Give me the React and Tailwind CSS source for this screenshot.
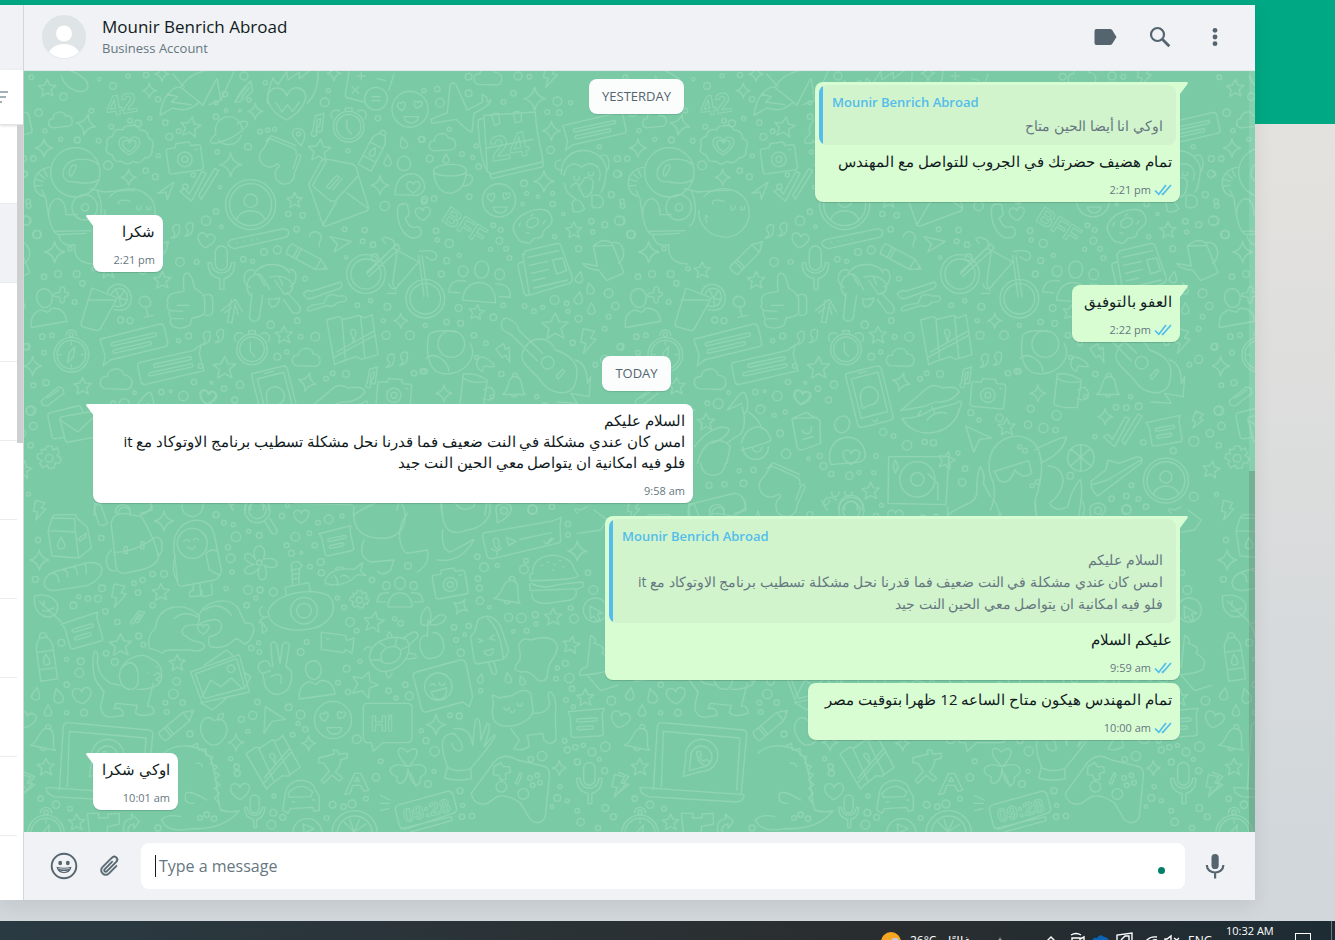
import { BsPaperclip } from "react-icons/bs";

const STAR = "M0-30L9-10L30-9L13 6L20 28L0 17L-19 29L-15 6L-31-7L-10-10Z";
const SPARK = "M0-32Q4-5 30 0Q5 5 0 32Q-5 5-30 0Q-5-4 0-32Z";
const HEART = "M0 24C-36 6-34-24-14-24C-4-24 0-14 0-12C2-18 8-26 18-24C38-18 28 8 0 24Z";
const CLOUD = "M-30 20C-48 12-42-12-24-10C-22-34 16-36 18-14C44-14 44 20 24 22Z";
const DROP = "M0-18C6-6 13 2 11 9C8 19-8 19-11 9C-12 2-5-6 0-18Z";
const BOLT = "M-14-36L20-28L8-8L24-4L-14 38L-6 8L-22 4Z";
const NOTE = "M-16 24L-8-22L18-30L12 16A8 8 0 1 1 4 10L8-14L-2-10L-6 26A8 8 0 1 1-16 24";
const BELL = "M-38 26C-14 16-26-34 4-34C34-34 20 14 38 26ZM-8 26A8 8 0 0 0 8 26M-4-34A8 8 0 1 1 10-34";
const CAMERA = "M-52-26Q-52-34-44-34L-24-34L-20-46L20-46L24-34L44-34Q52-34 52-26V34Q52 42 44 42H-44Q-52 42-52 34ZM-22 4A22 22 0 1 0 22 4A22 22 0 1 0-22 4M-9 4A9 9 0 1 0 9 4A9 9 0 1 0-9 4M34-20H40";
const CHAT = "M-94-30L86-34Q98-34 98-22V24Q98 34 88 34L-76 36L-102 48L-90 22ZM-60-12H66A5 5 0 0 1 66-2H-60A5 5 0 0 1-60-12M-60 10H46A5 5 0 0 1 46 20H-60A5 5 0 0 1-60 10";
const NOTECARD = "M-54-36L50-40L44-24V30Q44 38 36 38H-40Q-48 38-48 30V-22ZM-26-14H24A4 4 0 0 1 24-5H-26A4 4 0 0 1-26-14M-26 8H12A4 4 0 0 1 12 17H-26A4 4 0 0 1-26 8";
const PENCIL = "M-70-16H34L66 2L34 20H-70Q-78 2-70-16M34-16V20M-46-16V20M-36-16V20M56-4V8";
const PERSON = "M0-54C34-54 28 2 0 2C-28 2-34-54 0-54M-54 54C-52 10-22 6-14 8L2 18L16 8C44 10 54 30 54 54Z";
const PEOPLE = "M0-64C30-64 28-10 0-10C-28-10-30-64 0-64M-52 64C-52-16 52-16 52 64ZM-58-44C-38-44-38-10-58-10C-78-10-78-44-58-44M58-44C38-44 38-10 58-10C78-10 78-44 58-44M-62 42H-98C-96 12-80 0-48 4M62 42H98C96 12 80 0 48 4";
const SMILE = "M-54 0A54 54 0 1 0 54 0A54 54 0 1 0-54 0M-24 4C-46-8-38-26-26-18C-20-32-4-16-24 4M18-4C6-22 18-30 24-20C38-32 46-10 18-4M-18 22H26C20 48-14 46-18 22Z";
const AVATAR = "M-75 0A75 75 0 1 0 75 0A75 75 0 1 0-75 0M-63 0A63 63 0 1 0 63 0A63 63 0 1 0-63 0M-20-12A20 20 0 1 0 20-12A20 20 0 1 0-20-12M-42 46C-32 8 34 10 42 46";
const CLOCK = "M-46 0A46 46 0 1 0 46 0A46 46 0 1 0-46 0M-37 0A37 37 0 1 0 37 0A37 37 0 1 0-37 0M-5-20V6L8 22M-48-24A12 12 0 1 1-28-46M48-24A12 12 0 1 0 28-46M-10-46V-56H10V-46";
const COMPASS = "M-52 0A52 52 0 1 0 52 0A52 52 0 1 0-52 0M-43 0A43 43 0 1 0 43 0A43 43 0 1 0-43 0M-16-58A16 16 0 1 1 16-58M-6-60A6 6 0 1 0 6-60A6 6 0 1 0-6-60M10-24L6 8L-12 24L-6-6ZM0-38V-30M38 0H30M0 38V30M-38 0H-30";
const CHECKS = "M-58 10L-44 2L-30 18L8-50L20-44L-24 40ZM-2 22L46-58L58-52L6 34Z";
const MIC = "M-18-50A18 18 0 0 1 18-50V-14A18 18 0 0 1-18-14ZM-30-18H-40C-40 26-10 28-4 30V62H8V30C32 24 40 8 40-18H30C28 24-28 24-30-18Z";
const ENVELOPE = "M-90-16L-54-82Q-46-94-32-90L40-76Q52-72 54-60L90 56Q88 66 76 68L-36 110Q-44 112-48 104ZM-74-6Q-80-12-74-20L-38-82M-74-6L-28 32Q-18 40-8 32L58-40M-48 108L-6 36M90 58L24 10M-36-8L-6-42L2-36L-28-2ZM-18 2L10-32";
const BOTTLE = "M-22 60V-22C-22-44-10-48-10-52H10C10-48 22-44 22-22V60ZM-22-16H22M-22 30H22M-8-52A9 9 0 1 1 8-52M0-8C12 12 10 20 0 20C-10 20-12 12 0-8";
const QUOTES = "M-8-14A12 12 0 1 0-22 8Q-20 20-32 24Q-4 24-8-14M32-20A12 12 0 1 0 18 2Q20 14 8 18Q36 18 32-20";
const MAP = "M-74-56L-36-66L-24-58L24-70L40-62L62-72L80 48L32 62L14 54L-34 70L-50 78ZM-28-58L-18 60M28-66L40 56M-52 56L10 22L70-10M-44 40L66-22M2-10C-14-34 22-34 12-10L6 8Z";
const CUP = "M-52-24C-56-50 54-54 52-24C50 4 42 42 0 46C-38 46-50 4-52-24M-52-24C-50-4 50-4 52-24M50-12C82-20 76 26 42 22";
const GLASSES = "M-58-26A30 30 0 1 0-6 12C-2 4 4 6 6 14A30 30 0 1 0 58 20L62-34Q58-48 50-40L50 6M-58-26L-50-62L30-56Q46-52 44-40M-58-50L-48-72L34-66";
const PHONE = "M-50-78H38Q52-78 52-64V68Q52 82 38 82H-38Q-52 82-52 68V-64ZM-38-60H40V56H-38ZM-14-70H10M-6 69A6 6 0 1 0 6 69M-26 0A26 26 0 1 1-6 25L-28 30Z";
const DONUT = "M-60 4C-66-48 58-54 60-6C64 34 18 20 18 40C4 56-6 34-16 44C-34 62-40 38-48 40C-60 32-58 18-60 4M-18-2C-16-22 22-22 20-4C14 12-16 14-18-2M-40-8L-34-16M-28 18L-20 22M30 10L38 4M4-24L12-28";
const LEAF = "M-34-34C10-44 52-18 28 22C-8 42-40 14-34-34M-20-18L46 44M-6-4V-20M6 8L24 2M-10 10L8 12";
const FLOWER = "M-12-10C-32-64 32-64 12-10C66-26 66 34 14 8C42 60-18 68 0 14C-34 60-72 14-14 6C-66-6-40-52-12-10M-8 0A8 8 0 1 0 8 0A8 8 0 1 0-8 0";
const GEAR = "M-6-26H6L9-16L18-22L24-10L18-4L28 2L24 14L14 12L12 24L0 26L-4 18L-14 24L-22 14L-16 8L-28 2L-26-8L-16-8L-18-18L-8-18ZM-9 2A9 9 0 1 0 9 2A9 9 0 1 0-9 2";

const placed = [
  [STAR, 70, 54, 0.85, 0], [STAR, 500, 170, 1, 10], [STAR, 887, 240, 1.1, 5], [STAR, 812, 390, 0.75, 0],
  [STAR, 415, 630, 0.85, 0], [STAR, 780, 794, 0.85, 0], [STAR, 602, 892, 1.1, 0], [STAR, 176, 948, 0.85, 0],
  [STAR, 1650, 480, 0.8, 0], [STAR, 1594, 768, 1.3, 0], [STAR, 1358, 726, 0.75, 10], [STAR, 253, 600, 0.8, 0],
  [STAR, 411, 1566, 0.85, 0], [STAR, 290, 1724, 1.1, 0], [STAR, 460, 1778, 0.8, 0], [STAR, 66, 2090, 0.85, 0],
  [STAR, 158, 2256, 0.8, 0], [STAR, 1050, 1655, 1, 10], [STAR, 1022, 1842, 1.3, 20], [STAR, 1588, 1640, 0.85, 0],
  [STAR, 1642, 1724, 0.85, 10], [STAR, 1684, 1882, 0.85, 0],
  [SPARK, 186, 164, 1, 12], [SPARK, 376, 62, 0.7, 0], [SPARK, 60, 234, 0.85, 0], [SPARK, 414, 12, 0.7, 0],
  [SPARK, 694, 124, 0.75, 0], [SPARK, 620, 284, 1.1, 0], [SPARK, 314, 322, 0.75, 0], [SPARK, 1068, 346, 0.9, 0],
  [SPARK, 92, 546, 1, 0], [SPARK, 26, 888, 0.9, 0], [SPARK, 850, 936, 0.9, 15], [SPARK, 1130, 752, 0.7, 0],
  [SPARK, 1532, 86, 1.1, 0], [SPARK, 1582, 182, 0.9, 0], [SPARK, 1560, 334, 1, 0], [SPARK, 1260, 970, 0.8, 0],
  [SPARK, 420, 1353, 0.95, 0], [SPARK, 46, 1470, 0.95, 0],
  [SPARK, 636, 2017, 0.8, 0], [SPARK, 854, 2020, 0.7, 0], [SPARK, 1310, 1610, 0.8, 30], [SPARK, 1660, 1443, 0.95, 0],
  [SPARK, 1236, 1964, 0.95, 0], [SPARK, 1606, 2094, 0.7, 0], [SPARK, 930, 10, 0.7, 0],
  [HEART, 316, 228, 1.1, 0], [HEART, 316, 228, 0.7, 0], [HEART, 546, 512, 0.9, 10], [HEART, 1197, 432, 0.8, -5],
  [HEART, 550, 982, 0.85, 10], [HEART, 832, 1340, 0.8, 0], [HEART, 174, 1878, 1, -5],
  [HEART, 538, 1678, 0.6, 0], [HEART, 648, 2165, 1, 0], [HEART, 1788, 1950, 1, 15], [HEART, 1168, 352, 0.7, 0],
  [HEART, 788, 102, 2, 0],
  [CLOUD, 110, 152, 0.9, -8], [CLOUD, 1256, 220, 1, -5], [CLOUD, 848, 866, 1.05, 0], [CLOUD, 278, 932, 1.2, 0],
  [CLOUD, 1393, 22, 1.05, 0],
  [DROP, 1138, 218, 1, -15], [DROP, 1091, 272, 1, 0], [DROP, 1266, 266, 0.8, 0], [DROP, 1666, 622, 1, 12],
  [DROP, 1698, 656, 1, -12], [DROP, 1664, 684, 1.1, 12], [DROP, 1702, 716, 1, 0], [DROP, 36, 1872, 1.1, 10],
  [DROP, 102, 1878, 1.3, -14], [DROP, 72, 1922, 1, 0], [DROP, 111, 1420, 1, 0], [DROP, 1370, 1826, 0.8, 10],
  [DROP, 1452, 1824, 0.9, -10], [DROP, 1494, 1832, 0.8, -20],
  [BOLT, 1578, 18, 0.9, 0], [BOLT, 46, 1320, 0.8, 0], [BOLT, 284, 1576, 0.95, 0], [BOLT, 1692, 812, 1, 0],
  [BOLT, 1444, 848, 0.8, -45], [BOLT, 8, 2144, 1, 10], [BOLT, 1784, 2146, 0.9, 0],
  [NOTE, 882, 160, 1, 0], [NOTE, 1044, 918, 0.9, 0], [NOTE, 342, 1640, 0.7, 25],
  [BELL, 62, 2008, 1, 12], [BELL, 1470, 950, 0.9, 0], [BELL, 1454, 1566, 1.05, 10],
  [CAMERA, 482, 264, 1, -8], [CAMERA, 1110, 972, 0.98, 5], [CAMERA, 1278, 1540, 0.95, -10],
  [CHAT, 328, 816, 1.02, -13], [CHAT, 442, 892, 1, 168], [CHAT, 1710, 176, 0.95, -12],
  [NOTECARD, 180, 1684, 1.1, -16], [NOTECARD, 942, 1414, 0.95, -12], [NOTECARD, 1690, 1960, 1.05, -3],
  [PENCIL, 855, 566, 0.95, 28], [PENCIL, 462, 1958, 0.9, -40], [PENCIL, 390, 556, 0.9, -45],
  [PERSON, 66, 710, 1, -10], [PERSON, 872, 1826, 1, -8], [PEOPLE, 1370, 634, 0.95, 5], [PEOPLE, 1128, 1566, 0.7, 0],
  [SMILE, 1158, 118, 1, 0], [SMILE, 1425, 391, 0.92, 0], [SMILE, 927, 1950, 1.03, 0],
  [AVATAR, 680, 404, 1, 0],
  [CLOCK, 974, 170, 1, 0], [CLOCK, 684, 838, 1, 0], [COMPASS, 142, 854, 1, 0], [COMPASS, 66, 2290, 1.05, 0],
  [CHECKS, 526, 354, 1, 0], [MIC, 592, 596, 1, 0], [MIC, 692, 2226, 0.75, 0], [MIC, 1696, 2142, 0.95, 0],
  [ENVELOPE, 944, 358, 1, 0], [BOTTLE, 1050, 240, 1, 28], [BOTTLE, 66, 1762, 1.15, -8],
  [QUOTES, 474, 480, 1, 0], [QUOTES, 566, 800, 1, 0], [QUOTES, 1118, 868, 1, 0],
  [MAP, 982, 806, 1, 0], [MAP, 746, 2076, 0.9, -20], [CUP, 1278, 326, 0.95, 0], [GLASSES, 764, 276, 0.95, 18],
  [PHONE, 754, 978, 1.05, -14], [DONUT, 1526, 462, 1, -20], [LEAF, 66, 1612, 1, 0], [FLOWER, 706, 1478, 1, 0], [GEAR, 1006, 1588, 1, 0],
];

const drawings = [
  // cookie badge
  "M316 168Q336 160 348 180Q372 180 374 204Q396 216 384 236Q388 262 362 264Q348 286 328 274Q308 290 294 274Q268 278 266 256Q238 248 250 226Q242 204 266 198Q270 172 296 180Q300 166 316 168",
  // rocket
  "M408 136C414 76 450 48 470 52L526 96C490 130 462 118 446 114ZM470 52C490 20 520 0 570 0M526 96L536 106L578 26M430 72L460 80L442 96L500 104M446 12L480 50M556 104L590 92L632 0M590 92L580 28",
  // peeler and hands
  "M112 18C126 66 190 80 192 46C190 28 168 14 140 2M632 96L680 32L686 62Q660 92 642 96ZM640 80L664 48M652 84L676 52",
  // flames over the heart
  "M730 100C728 66 744 36 746 24L762 44L788 4L792 30L826 6L826 26L860 0M882 0C886 60 860 90 850 100M756 98L774 126L790 104L806 124L826 96",
  // calculator
  "M976 0L964 74Q964 84 974 84L1020 96M1110 12L1094 62M1022 86A34 34 0 1 0 1090 86A34 34 0 1 0 1022 86M1044 80H1068M1044 92H1068M984 50L1004 70M1004 50L984 70M1012 6V30M1000 18H1024M1060 26L1084 32",
  // planet
  "M576 192A40 40 0 1 1 654 176M584 210A40 40 0 0 0 652 196M576 192C552 214 552 226 590 216C640 200 690 158 664 154C654 152 644 158 640 162",
  "M810 202C790 172 838 166 842 192C844 206 836 216 832 228ZM818 192A6 6 0 1 0 830 192A6 6 0 1 0 818 192",
  // astronaut
  "M80 307A74 74 0 1 0 228 307A74 74 0 1 0 80 307M226 328C196 348 168 336 132 334C100 318 120 260 182 268Q210 270 220 282M136 308Q138 286 152 284Q164 286 142 318Q136 320 136 308",
  "M76 292C20 298 18 370 58 378M60 300L70 320M46 312L62 326M36 328L56 334M32 348L54 346M54 360L66 386C72 440 82 492 104 494L186 490M74 440C70 380 124 360 126 434H160M90 484L200 482M144 412A38 38 0 1 0 220 412A38 38 0 1 0 144 412M172 412A11 11 0 1 0 194 412A11 11 0 1 0 172 412M104 494C110 530 142 528 152 524C148 580 190 580 208 582M198 356L240 366C300 360 320 360 330 362M218 360C240 400 234 460 214 468",
  "M258 380C290 340 380 350 392 412C404 470 350 510 312 500C260 496 234 440 244 420M284 402C280 388 300 388 318 394M340 408A6 10 20 1 0 352 408M368 410A5 8 0 1 0 380 410M270 440Q258 430 266 456",
  "M402 370L450 336L430 388L426 366ZM918 500L982 514L930 546L940 522Z",
  // password field
  "M612 520Q612 512 626 508L780 476Q796 480 794 490Q794 498 784 502L632 536Q614 532 612 520M640 518h1M660 514h1M682 510h1M700 507h1",
  "M856 500A18 18 0 1 1 888 514Q884 524 886 530",
  // helmet girl and phone
  "M1114 374C1108 300 1198 290 1202 352Q1202 366 1180 376ZM1120 284C1122 250 1158 250 1160 282C1156 308 1124 308 1120 284M1122 410Q1132 396 1150 404L1156 434L1144 444Q1152 470 1168 472L1184 470Q1200 488 1186 500C1140 520 1112 450 1122 410",
  // bicycle
  "M968 612A58 58 0 1 0 1084 612A58 58 0 1 0 968 612M981 612A45 45 0 1 0 1071 612A45 45 0 1 0 981 612M1146 686A58 58 0 1 0 1262 686A58 58 0 1 0 1146 686M1158 686A46 46 0 1 0 1250 686A46 46 0 1 0 1158 686M1028 612L1110 530Q1118 510 1092 504Q1078 498 1074 508L1084 520M1028 606L1120 522L1128 534L1034 620M1120 540L1106 640L1116 662M1110 536L1184 576L1120 650M1184 556L1200 680M1194 556L1212 680M1186 544Q1240 536 1238 560Q1230 580 1206 560M1096 642A14 14 0 1 0 1124 642M1090 670H1116",
  // juice and glass
  "M204 654L280 684L228 778Q222 784 212 780L176 770Q170 768 172 758ZM190 690H276M250 668C262 628 318 636 322 684C320 716 300 726 270 718M262 672C276 644 312 652 310 686C306 710 284 714 268 706M286 684L300 664M286 684L308 690M286 684L290 708M286 684L274 656M346 700C340 672 384 670 380 704Q370 714 356 710ZM366 712L372 740M360 742L388 736M110 652Q118 646 122 656V666L132 668Q136 680 122 680L120 696Q112 704 108 692V682L88 678Q86 668 106 668Z",
  // thumb
  "M432 700Q424 674 456 668L480 664Q476 620 482 612Q494 604 504 624L512 654Q540 670 542 690L542 730Q530 742 504 744L498 766Q470 780 448 770Q434 760 442 744Q430 730 438 722Q424 712 432 700M460 706H496M440 722L476 724M448 746L478 746M540 676Q566 666 566 690V726Q564 738 544 736",
  "M592 722L634 688L656 726M622 690L610 756L624 758L634 700M602 728L622 714M642 734L636 710",
  // monkey hiding
  "M690 610C720 570 780 580 796 608M690 600C660 590 648 640 678 652M796 600C820 590 824 640 798 650M684 680C650 650 680 600 712 616L738 660M738 622Q780 610 804 640Q812 670 780 672L752 630M702 612L722 646M764 618L776 644M684 670L676 744Q690 764 706 744L716 676M790 668L828 710Q832 736 806 728L778 688M734 686Q750 690 768 684Q762 712 742 710Q734 702 734 686",
  "M838 672Q850 656 862 664L950 636Q960 648 946 656L870 682Q850 694 838 672M850 718Q852 704 900 700L910 678Q926 670 940 678H962Q974 688 962 694L940 698Q924 714 910 706L860 722Q850 724 850 718",
  // calendar
  "M1380 136L1534 126Q1536 180 1556 264L1554 276L1402 312L1390 306ZM1388 234L1528 208M1556 264L1558 290L1402 326L1396 306M1404 140Q1402 130 1414 130H1424L1428 160L1412 166ZM1468 130Q1470 124 1482 124L1492 130V154L1474 158ZM1362 150Q1366 270 1392 306M1362 150L1380 144",
  // airplane
  "M1278 44Q1286 34 1296 44L1330 120L1376 96L1374 72L1388 82L1390 96L1400 90Q1402 104 1350 130L1344 186Q1336 188 1296 148L1224 160L1220 148L1270 128Z",
  // monkey covering mouth
  "M1612 312C1610 220 1736 220 1748 300C1744 330 1740 360 1730 366M1612 300C1586 300 1588 270 1610 270M1730 258C1760 240 1760 300 1746 304M1620 316C1630 270 1660 280 1672 292C1700 266 1740 290 1726 330M1640 350Q1660 330 1664 348M1664 350L1684 322Q1714 320 1706 354Q1700 384 1680 380ZM1652 318A8 8 0 1 0 1664 318M1694 306A8 8 0 1 0 1708 306M1622 340Q1622 370 1654 386M1644 400Q1650 380 1670 396L1682 416Q1670 430 1648 424ZM1704 376Q1740 370 1738 402Q1728 420 1704 410Z",
  // newspaper and watering can
  "M1500 554Q1500 544 1508 542L1600 520Q1610 520 1612 530L1644 620Q1648 634 1636 640L1514 676Q1506 680 1500 668L1482 590Q1478 580 1496 576M1496 552L1516 674M1512 562L1604 542M1516 586L1570 574M1522 610L1574 598M1526 632L1562 624M1586 570L1616 564L1628 602L1598 612ZM1530 654L1630 630",
  "M1708 528Q1740 500 1764 520L1800 608L1748 632L1724 600Q1690 600 1676 580L1720 588L1708 528L1766 526M1766 518C1798 510 1812 560 1784 580",
  // lens and guitar
  "M1242 822A40 40 0 1 0 1322 822A40 40 0 1 0 1242 822M1216 792Q1240 776 1300 786M1214 796Q1200 880 1240 906C1300 930 1370 870 1338 820M1206 866C1230 840 1276 876 1274 904M1358 880Q1362 854 1384 864Q1414 880 1410 890H1394Q1376 882 1376 904Q1360 900 1358 880",
  "M1436 780Q1424 746 1450 744Q1484 760 1484 780L1556 850M1462 794L1540 872M1436 780L1462 794M1552 878A19 19 0 1 0 1590 878A19 19 0 1 0 1552 878M1496 846C1520 790 1580 800 1594 840C1660 860 1670 900 1650 950C1630 980 1580 970 1556 940C1540 910 1480 880 1496 846M1596 918L1616 898L1622 904L1602 928ZM1654 870Q1690 880 1690 940L1700 920Q1696 970 1696 980L1640 970L1660 1000L1600 996",
  "M1318 912Q1350 906 1390 930L1378 1012Q1330 1016 1308 1002ZM1316 924Q1350 944 1390 934M1380 960Q1404 940 1412 972Q1404 1000 1376 984M52 992L102 952Q120 950 120 970L72 1006Q52 1012 52 992M70 984L104 960",
  // envelopes
  "M72 1040Q70 1030 80 1028L160 1008Q170 1006 172 1016L178 1026M72 1040L84 1100Q86 1108 96 1106L120 1102M108 1050Q106 1042 114 1040L230 1020M108 1050L124 1110Q126 1118 134 1116L220 1100M108 1050L162 1086L220 1030",
  // squid arms
  "M990 1310C980 1390 1030 1410 1090 1404C1140 1396 1160 1340 1128 1290M1020 1410Q1000 1460 1040 1476L1110 1470L1100 1500Q1080 1520 1060 1504M1150 1330C1110 1380 1130 1440 1148 1450L1210 1440Q1220 1480 1180 1506M1254 1300C1250 1380 1280 1400 1330 1380C1400 1370 1410 1310 1390 1290M1256 1380Q1250 1440 1280 1446L1350 1408M1240 1470Q1310 1480 1350 1410",
  // milk and bread
  "M72 1382L84 1344L92 1334H156V1342L190 1372L202 1434L164 1464L84 1458ZM72 1382L154 1386L164 1464M154 1386L152 1346L88 1344M162 1408L186 1390L186 1400L168 1414Z",
  "M60 1540Q62 1510 110 1500L190 1478Q232 1474 234 1500Q230 1530 190 1546L90 1562Q62 1560 60 1540M88 1510Q104 1512 104 1536M118 1500Q134 1502 130 1520M148 1490Q160 1494 160 1514M180 1480Q190 1490 186 1510",
  // backpack
  "M262 1366Q262 1330 300 1330L352 1340Q390 1400 404 1460Q400 1490 340 1502L300 1510Q280 1510 276 1490ZM270 1446Q320 1450 386 1408M282 1330A17 17 0 1 1 320 1332M262 1440Q240 1460 250 1490Q260 1506 276 1502M388 1404Q410 1396 414 1420V1440Q408 1458 400 1456M300 1430h10v20h-10ZM350 1416h10v20h-10ZM212 1300L230 1304L250 1360Q240 1370 226 1364Q210 1330 212 1300M350 1330L384 1320L380 1290",
  // penguin
  "M450 1440C440 1340 560 1320 572 1400L592 1500Q592 1520 572 1530L476 1548Q460 1550 460 1530ZM460 1420A45 45 0 1 0 550 1420A45 45 0 1 0 460 1420M478 1414Q490 1404 498 1414M508 1410Q516 1400 524 1410M490 1430Q506 1446 514 1428M546 1450Q570 1430 584 1450M546 1450L556 1500L588 1516M454 1456Q440 1500 458 1530M508 1548V1560Q490 1566 498 1580L530 1578L528 1542M534 1560Q530 1578 540 1580L566 1574L562 1540",
  // magnifier
  "M662 1320A38 38 0 1 0 738 1320A38 38 0 1 0 662 1320M674 1320A26 26 0 1 0 726 1320A26 26 0 1 0 674 1320M722 1354L744 1390Q760 1396 760 1382L738 1346",
  // fish
  "M904 1530Q920 1490 990 1498L1016 1478L1010 1504L1026 1516L1000 1514Q960 1556 904 1540ZM934 1496Q946 1486 960 1494M930 1516Q946 1530 938 1546M922 1522h2M950 1520Q962 1510 974 1524",
  // submarine
  "M732 1626C750 1570 860 1550 912 1576C950 1610 920 1670 850 1678C790 1686 736 1670 732 1626M800 1622A40 40 0 1 0 880 1622A40 40 0 1 0 800 1622M818 1622A22 22 0 1 0 862 1622A22 22 0 1 0 818 1622M786 1576L784 1552L854 1538L860 1566M806 1546L802 1486Q806 1472 824 1476L834 1486L826 1500L824 1542M804 1500L824 1496M806 1514L824 1510M806 1528L824 1524M716 1610A16 16 0 1 0 730 1640Q700 1650 708 1660M714 1656L716 1690L730 1680Z",
  // heart hands
  "M414 1750Q400 1740 376 1736Q366 1700 394 1674L400 1650C420 1600 490 1600 524 1636Q530 1650 520 1664C460 1660 470 1700 490 1700C500 1720 540 1710 542 1730Q530 1750 500 1740L440 1740Q420 1740 414 1750M524 1640C540 1590 610 1580 640 1610L664 1660Q690 1656 690 1680Q680 1720 660 1722Q640 1700 630 1710Q600 1740 560 1730Q550 1720 556 1700C610 1690 600 1640 560 1650Q540 1656 530 1660M450 1646Q480 1620 520 1640M540 1620Q590 1590 622 1636",
  // dog
  "M212 1744Q200 1780 214 1830L240 1866L230 1910Q232 1940 260 1942L298 1936Q296 1910 270 1916L276 1900L340 1906L334 1928Q350 1944 390 1930Q390 1906 370 1908L388 1840M212 1744Q224 1740 220 1780Q226 1820 260 1840L290 1846M286 1816C290 1770 350 1740 380 1766C420 1780 420 1830 400 1846Q370 1860 340 1858M290 1796Q326 1760 340 1800Q350 1850 326 1858Q290 1860 286 1816M370 1810h3M396 1790h3M390 1816Q410 1800 408 1820L396 1828L406 1834",
  // photo
  "M500 1806L646 1754L676 1866L534 1898ZM514 1812L638 1766L662 1854L542 1886ZM534 1882L560 1830L590 1850L622 1824L656 1856M610 1796A11 11 0 1 0 632 1796A11 11 0 1 0 610 1796M540 1786L608 1740L626 1756M662 1808L680 1820L664 1850M530 1898L566 1920L612 1880",
  // victory hand
  "M706 1780Q730 1760 740 1790M716 1810L724 1850Q750 1890 790 1860Q810 1830 800 1800L786 1790L796 1724Q786 1710 776 1724L768 1780L758 1722Q744 1708 740 1726L746 1790M706 1780Q696 1800 716 1810L740 1802M740 1820Q780 1800 770 1840",
  // video camera
  "M892 1690Q892 1686 900 1688L964 1696L968 1712L990 1704L984 1750L964 1738L960 1748L892 1738ZM908 1706h6",
  // turtle
  "M1036 1760C1040 1710 1110 1690 1150 1710C1170 1760 1120 1810 1070 1804Q1040 1790 1036 1760M1070 1756C1080 1730 1110 1720 1130 1740C1136 1770 1100 1790 1074 1776ZM1020 1740Q1030 1724 1044 1736M1090 1704Q1094 1670 1104 1700M1140 1704Q1180 1670 1182 1700L1156 1724M1156 1750Q1180 1750 1176 1764L1146 1768M1086 1806Q1090 1840 1104 1810M1064 1716L1084 1730M1118 1704L1114 1730M1150 1730L1130 1740M1040 1770L1070 1770",
  // cherry and ice cream
  "M1212 1650L1210 1700M1190 1660Q1190 1620 1212 1610Q1230 1640 1212 1664Q1200 1670 1190 1660M1214 1664Q1250 1620 1266 1640Q1260 1670 1214 1664M1206 1696C1170 1700 1190 1780 1226 1764C1280 1760 1260 1680 1226 1688M1340 1700L1352 1686L1362 1650Q1400 1620 1430 1670L1454 1740Q1450 1760 1436 1768L1360 1782Q1350 1780 1350 1768ZM1390 1644Q1430 1680 1438 1766M1394 1780L1404 1810Q1416 1820 1418 1804L1410 1776M1362 1706L1376 1712L1364 1718M1410 1696L1396 1706L1412 1710M1380 1744L1408 1736Q1408 1756 1394 1756Q1382 1754 1380 1744",
  // voice message
  "M1376 1400Q1374 1390 1384 1388L1580 1354Q1604 1348 1612 1342L1608 1366L1610 1410Q1610 1420 1598 1420L1406 1466Q1390 1468 1388 1454ZM1408 1410Q1414 1396 1424 1410L1426 1430Q1418 1440 1412 1430ZM1402 1436Q1420 1450 1432 1434M1418 1444L1420 1456M1448 1402L1476 1414L1454 1426ZM1488 1408L1582 1388M1560 1416L1568 1422L1582 1404M1572 1420L1590 1404",
  "M1420 1358L1416 1320C1410 1296 1466 1290 1462 1320Q1454 1344 1420 1358M1430 1322A10 10 0 1 0 1450 1322A10 10 0 1 0 1430 1322",
  // burger
  "M1526 1510C1520 1440 1640 1440 1652 1500L1662 1516Q1668 1530 1520 1532Q1512 1510 1526 1510M1522 1540Q1560 1560 1600 1544L1676 1536Q1686 1550 1664 1556L1520 1562Q1512 1540 1522 1540M1524 1570Q1520 1600 1570 1600L1640 1590Q1662 1580 1656 1560M1552 1486h4M1570 1476h4M1590 1484h4M1606 1472h4M1616 1490h4M1586 1500h4",
  "M1678 1620A36 36 0 1 0 1750 1620A36 36 0 1 0 1678 1620M1698 1608L1736 1630L1720 1632L1728 1650L1718 1652L1710 1638L1700 1646Z",
  // splash
  "M1484 1730Q1490 1700 1520 1710C1590 1690 1620 1720 1584 1770Q1570 1790 1570 1820Q1560 1840 1540 1830Q1520 1800 1490 1806Q1460 1800 1484 1776Q1494 1760 1484 1730",
  // winking bubble
  "M1168 1820Q1166 1808 1176 1806L1308 1770Q1322 1768 1326 1782L1346 1880L1336 1910L1316 1896L1206 1926Q1194 1928 1192 1914ZM1202 1850A41 41 0 1 0 1284 1850A41 41 0 1 0 1202 1850M1218 1846Q1226 1838 1234 1846M1246 1838A8 8 0 1 0 1262 1838M1222 1866L1268 1854Q1270 1886 1244 1888Q1224 1884 1222 1866",
  // cat
  "M1406 1880Q1400 1870 1426 1884L1466 1876Q1500 1850 1520 1870L1526 1910C1540 1960 1430 1990 1410 1950C1396 1920 1414 1910 1406 1880M1440 1912A8 8 0 1 0 1456 1912M1480 1900A8 8 0 1 0 1496 1900M1460 1924Q1466 1934 1474 1920M1530 1930Q1580 1930 1576 1890Q1566 1870 1580 1866Q1600 1880 1594 1940L1596 2010Q1580 2030 1560 2010L1556 1990L1510 1996L1516 2030Q1490 2046 1470 2036L1486 2010L1460 1976",
  "M1270 2090C1240 2010 1260 1990 1290 1990Q1320 2020 1314 2040Q1290 2050 1284 2020M1290 1976Q1340 1970 1346 2026L1354 1950Q1370 1930 1370 2010L1390 1960Q1406 1960 1380 2030L1410 1994Q1430 1990 1340 2096M1270 2092Q1300 2110 1340 2096L1342 2126Q1300 2136 1262 2124Z",
  // gamepad
  "M1400 2090Q1430 2040 1480 2070L1550 2086Q1580 2090 1576 2120L1564 2240Q1550 2270 1520 2250L1490 2200Q1450 2170 1420 2180L1390 2200Q1350 2210 1342 2170ZM1410 2090L1430 2078L1438 2090L1456 2090L1460 2106L1444 2112L1446 2128L1430 2130L1424 2116L1408 2114ZM1474 2140L1488 2108L1494 2112L1482 2142ZM1416 2150A16 16 0 1 0 1448 2150A16 16 0 1 0 1416 2150M1482 2172A16 16 0 1 0 1514 2172A16 16 0 1 0 1482 2172",
  // laptop
  "M106 2160L118 1970Q120 1956 134 1958L376 1980Q388 1982 386 1996L370 2170M130 2150L136 1984L366 2004L356 2160M66 2152L378 2174Q380 2190 360 2196L90 2180Q64 2170 66 2152M204 2064A48 48 0 1 1 250 2104L196 2120ZM218 2062A32 32 0 1 1 250 2092L214 2102ZM236 2046L246 2044L250 2056L244 2062Q250 2072 258 2074L264 2068L276 2074Q272 2088 260 2086Q236 2078 236 2046",
  // dinosaur
  "M420 2050C460 2010 540 2030 556 2060C580 2100 580 2200 590 2220Q620 2230 646 2222Q600 2280 500 2276Q430 2290 412 2250Q430 2230 470 2240M500 2030L520 2020L524 2040L546 2036L546 2056L566 2060L560 2080L580 2090L568 2104L586 2114L572 2130L588 2144L572 2154L586 2170L572 2184L584 2200M516 2080Q530 2076 536 2090M548 2190Q480 2150 484 2180Q480 2200 510 2200",
  // apple
  "M570 1952C550 1930 526 1950 530 1984Q550 2040 586 2020Q620 1990 604 1960Q590 1940 570 1952M582 1950Q578 1930 598 1930Q600 1950 582 1950",
  "M724 1910L784 1948L744 1954L720 1990Z",
  // greeting bubble
  "M1030 1900H1150Q1164 1900 1164 1914V2000Q1164 2018 1148 2018H1076L1048 2044L1042 2018H1030Q1018 2016 1018 2000V1914Q1018 1900 1030 1900",
  // translate, clover, car
  "M884 2064L930 2052L928 2040L940 2040L944 2052L970 2050V2064L950 2070Q950 2090 934 2106L956 2124L946 2134L924 2116L900 2140L892 2130L916 2104L900 2080L884 2078ZM962 2174L992 2110L1010 2110L1034 2160L1020 2164L1010 2146H986L978 2170ZM992 2134H1006L1000 2122Z",
  "M1152 2090C1100 2040 1130 2020 1150 2046C1180 2020 1196 2050 1152 2090C1210 2070 1220 2110 1190 2120C1190 2160 1160 2150 1152 2096C1150 2150 1110 2150 1120 2120C1080 2110 1100 2070 1152 2090M1160 2110L1176 2150",
  "M776 2220L784 2170C790 2120 866 2120 874 2160L886 2180V2220L870 2224L866 2212L800 2216L792 2230ZM792 2170Q830 2130 866 2166L860 2180L796 2182ZM804 2196h8M866 2190h6M806 2290A44 44 0 1 1 894 2290M838 2262L870 2276L840 2290Z",
  "M924 2290A66 66 0 1 1 1060 2290M940 2290A50 50 0 1 1 1044 2290M990 2286L960 2256M990 2286L978 2248M990 2286L1006 2250M990 2286L1026 2262M1070 2176L1098 2190M1068 2200H1096M1070 2222L1094 2216",
  // digital clock
  "M1114 2220Q1114 2206 1126 2204L1270 2164Q1284 2162 1288 2176L1298 2216Q1298 2226 1286 2230L1150 2276Q1130 2280 1126 2266ZM1130 2276L1282 2240L1284 2252L1160 2286M196 2286L190 2230H224V2244H252V2232L286 2230V2262L250 2270V2290M300 2286Q292 2250 324 2246L322 2232L346 2254L330 2276V2262Q310 2264 312 2286",
  // cupcake and bow
  "M1690 1790L1700 1696Q1724 1710 1710 1720Q1750 1730 1734 1750Q1770 1770 1756 1790Q1760 1810 1668 1816Q1660 1800 1690 1790M1690 1816L1730 1862L1780 1846M1660 1330Q1640 1310 1670 1320L1690 1310M1710 1320L1750 1350L1730 1380L1660 1390",
];

// Middle band of the tile: its columns are 10% wider apart than the rest.
const bandX = (x) => x * 1.1 - 15;

const bandPlaced = [
  [STAR, 254, 1055, 0.85, 0], [STAR, 1074, 1070, 0.85, 0], [STAR, 910, 1170, 0.85, 15], [STAR, 1632, 1198, 0.85, 10],
  [STAR, 703, 1262, 0.85, 0], [SPARK, 1342, 1040, 0.75, 0], [BOLT, 1594, 1050, 0.7, 10], [HEART, 516, 984, 0.85, 10],
  [NOTECARD, 1508, 1084, 1, -10], [CHECKS, 1390, 1090, 1, 0], [AVATAR, 1508, 1232, 0.9, 0],
  [GEAR, 1702, 1162, 1.3, 0], [GLASSES, 456, 1266, 1.05, 20], [HEART, 650, 1162, 0.9, 0],
];

const bandDrawings = [
  // lips
  "M784 1022L860 952Q876 940 898 954Q938 946 944 966Q920 1000 880 996L846 1010ZM788 1046Q840 1044 866 1020L936 1000Q960 980 944 1020C930 1090 830 1120 788 1046M830 1040L840 1022M870 1010L878 1030M856 1050Q880 1020 910 1030",
  // scooter
  "M230 1180C250 1100 300 1100 320 1130L310 1180M222 1130C270 1060 310 1070 316 1076Q316 1100 270 1120M310 1120L350 1090Q366 1060 352 1010M350 1120C360 1070 400 1060 420 1084L432 1110Q420 1120 350 1140M352 1000L312 1020L340 980Q356 960 360 970Q376 1010 360 1030M370 1026Q400 1050 406 1076M354 1130A32 35 0 1 0 424 1130M380 1132A13 14 0 1 0 406 1132M240 1180A32 35 0 1 0 306 1180",
  // passport
  "M488 1046L526 1028Q532 1026 536 1034L564 1050L566 1120L516 1140Q506 1142 502 1130ZM488 1046L556 1042M516 1080A13 14 0 1 0 540 1070M518 1108L546 1100",
  // woman
  "M604 1066C606 1032 644 1028 646 1060C640 1098 608 1096 604 1066M594 1184C570 1096 676 1070 688 1150Q690 1170 672 1176Z",
  // record player
  "M752 1160L916 1160L908 1304L750 1300ZM782 1228A48 53 0 1 0 878 1228A48 53 0 1 0 782 1228M812 1228A18 20 0 1 0 848 1228A18 20 0 1 0 812 1228M860 1212L886 1240V1290M770 1170L764 1190L770 1210L778 1190Z",
  "M962 1068L1032 1104L1000 1108L984 1146Z",
  // squid with glasses
  "M1030 1220C1000 1100 1130 1060 1160 1140C1180 1200 1160 1240 1160 1260C1150 1290 1146 1310 1156 1336M1030 1220Q1050 1260 1030 1320M1002 1190C980 1240 1010 1280 970 1300Q930 1320 912 1336M1002 1190Q1016 1210 1010 1240L1030 1280M1040 1204L1134 1172L1142 1210Q1120 1230 1096 1200Q1080 1250 1052 1230ZM1150 1140Q1200 1110 1236 1100C1230 1150 1180 1170 1166 1180M1186 1188C1240 1190 1240 1260 1190 1300Q1210 1330 1240 1310Q1250 1260 1274 1228Q1284 1260 1270 1336",
  // ball and shoe
  "M1240 1164A36 40 0 1 0 1312 1164A36 40 0 1 0 1240 1164M1250 1138L1304 1188M1248 1188L1300 1138M1276 1126V1202M1304 1234L1344 1200L1350 1170L1380 1180L1430 1160Q1450 1164 1440 1180L1322 1278Q1300 1256 1304 1234M1306 1244L1348 1230L1440 1170",
  // toaster and paw
  "M206 1336Q200 1306 220 1300L330 1270Q354 1270 360 1300L362 1310Q350 1330 330 1336M264 1330A20 20 0 1 1 302 1330M584 1320C560 1290 590 1270 610 1290M570 1292A10 14 0 1 0 590 1290M596 1266A10 14 0 1 0 616 1266M632 1264A10 14 0 1 0 652 1266M618 1320A32 35 0 1 1 680 1320M632 1320A18 20 0 1 1 666 1320",
];

const parseDots = (s) => s.split(",").map((d) => d.split(" ").map(Number));

const dots = parseDots("22 22 7,118 80 11,44 128 11,202 122 7,226 28 5,267 48 10,312 17 6,366 15 8,402 88 8,424 158 8,377 145 6,603 72 8,660 18 12,724 38 6,576 98 6,606 122 5,648 122 4,576 140 8,675 90 6,731 180 6,752 178 6,913 62 6,902 97 13,63 182 6,110 208 6,160 210 9,224 212 7,262 170 7,28 266 8,4 312 7,252 286 13,318 152 7,342 160 10,365 302 8,394 320 9,403 257 6,436 200 10,464 184 7,672 230 10,708 185 7,580 246 6,1062 145 8,972 242 6,1192 208 9,1217 266 10,588 352 5,508 315 6,484 350 8,576 425 8,546 452 14,592 470 5,793 432 8,836 436 8,8 452 13,40 494 12,14 408 7,818 478 8,1082 408 14,962 478 7,1022 480 8,1016 514 7,1047 524 8,1202 388 9,138 536 6,102 612 10,60 620 8,158 612 10,175 640 8,210 596 6,468 576 13,518 576 7,658 568 8,686 574 6,720 546 10,760 540 12,966 562 5,1052 562 10,843 626 7,820 752 8,290 750 9,318 752 9,152 696 7,740 764 11,1000 706 7,1040 692 6,1090 710 10,1078 752 6,1086 796 12,1158 796 13,1204 766 6,55 800 8,84 796 7,8 830 10,60 848 7,464 812 6,494 798 9,530 888 7,760 860 10,788 846 6,830 800 7,874 800 13,28 946 7,66 938 9,332 968 5,412 966 8,440 964 4,478 978 14,510 936 8,562 938 4,600 956 8,648 944 11,632 990 9,906 926 7,926 910 7,966 912 10,1170 910 8,1202 904 8,18 1022 12,28 1068 11,268 1000 7,1240 57 8,1248 98 13,1334 70 10,1334 20 10,1482 18 12,1516 20 7,1468 70 8,1438 96 7,1570 126 7,1606 128 8,1600 94 13,1640 98 6,1200 62 6,1194 208 9,1314 252 7,1276 178 6,1356 228 6,1346 262 6,1364 290 8,1580 240 11,1500 340 10,1508 370 6,1542 380 5,1586 370 6,1586 402 8,1496 402 5,1618 432 5,1702 454 8,1706 486 6,1592 500 6,1742 464 9,1786 452 14,1762 374 9,1794 394 7,1780 312 11,1780 266 9,1726 230 6,1336 380 8,1230 386 8,1200 394 8,1236 482 8,1240 510 6,1276 520 12,1306 556 6,1268 572 9,1252 612 9,1408 466 7,1430 480 7,1426 512 10,1446 536 7,1400 538 6,1456 564 7,1664 536 9,1820 493 12,1304 714 10,1268 756 8,1310 760 9,1438 706 7,1408 742 10,1502 708 7,1530 724 7,1556 712 6,1592 690 13,1628 700 7,1632 724 6,1664 746 10,1754 670 13,1774 708 11,1754 740 7,1742 776 7,1646 818 8,1788 830 9,1350 796 8,1386 820 7,1358 862 6,1196 904 8,1432 912 8,1538 980 6,1714 884 7,1742 868 12,42 1410 8,232 1404 8,34 1528 9,576 1334 9,600 1358 7,628 1364 6,636 1400 14,674 1384 6,706 1396 9,612 1432 8,620 1465 13,624 1506 6,774 1338 8,814 1400 13,856 1390 7,788 1426 7,802 1450 9,832 1448 4,872 1426 8,890 1476 10,858 1490 7,892 1508 9,882 1358 7,914 1348 13,954 1338 6,386 1512 8,420 1512 10,356 1530 8,330 1540 7,342 1568 8,386 1606 8,234 1555 10,148 1606 10,164 1580 6,192 1586 8,222 1586 10,244 1624 8,280 1656 8,606 1556 6,672 1560 13,708 1560 9,748 1566 12,696 1584 6,668 1606 8,940 1584 6,960 1612 7,1044 1530 8,1112 1646 6,1130 1660 8,978 1656 13,998 1682 7,112 1718 10,128 1768 6,170 1774 10,166 1808 13,246 1750 8,272 1776 10,344 1698 9,358 1724 7,128 1844 8,180 1928 10,128 1928 6,458 1834 11,448 1872 14,476 1898 8,424 1898 7,428 1926 7,682 1734 8,706 1746 7,704 1718 6,848 1716 7,830 1746 10,968 1796 10,942 1838 7,972 1866 8,1008 1774 6,1094 1862 8,1144 1844 8,1116 1884 6,1156 1878 12,652 1948 9,686 1936 12,700 1896 8,672 1984 6,794 1912 10,830 1934 13,822 1960 6,844 1978 8,806 1994 7,498 1992 9,998 2008 13,1192 1982 6,1206 2012 9,620 2066 6,638 2090 8,640 2110 9,750 2178 6,748 2228 10,776 2242 9,742 2264 13,908 2244 7,926 2204 10,958 2210 8,984 2202 12,1026 2186 7,1056 2122 11,1070 2074 7,1212 2142 10,50 2186 8,96 2204 11,138 2216 7,402 2274 9,528 2244 7,548 2234 8,570 2246 8,1152 1488 10,1360 1460 8,1380 1492 13,1420 1486 6,1362 1526 8,1366 1554 9,1368 1592 11,1396 1612 5,1506 1472 7,1500 1498 13,1454 1642 12,1492 1644 14,1534 1634 9,1536 1662 6,1508 1682 7,1468 1684 5,1526 1318 13,1584 1310 8,1632 1362 8,1632 1394 7,1692 1508 8,1708 1560 13,1650 1646 13,1640 1614 7,1290 1672 8,1334 1668 8,1296 1710 7,1310 1748 11,1322 1694 5,1624 1780 9,1636 1824 14,1596 1826 7,1600 1794 6,1644 1856 8,1626 1890 7,1648 1910 6,1762 1892 13,1278 1936 7,1306 1938 9,1232 2044 14,1230 2104 6,1308 2162 9,1370 1862 6,1622 2012 7,1630 2040 9,1654 2032 8,1678 2026 6,1704 2046 12,1744 2030 14,1554 2058 14,1520 2068 8,1660 2076 9,1726 2068 6,1742 2102 9,1608 2150 6,1600 2184 10,1584 2210 5,1630 2192 6,1744 2214 10,1768 2240 9,1660 2222 7,1670 2256 11,1722 2274 8,1518 2124 7,1540 2116 7,1526 2146 7,1548 2138 7,1316 2206 6,1314 2240 8,1344 2238 8");

const bandDots = parseDots("737 1086 11,765 1098 7,802 1126 14,850 1116 8,874 1118 9,976 1028 9,998 1050 6,1054 1044 11,1132 1064 11,1139 1016 10,1174 1074 14,1207 1080 8,1210 1036 14,1314 1100 6,1372 1012 8,1400 1013 8,1434 1009 10,287 1001 15,402 1018 13,440 1036 6,470 1026 6,456 1090 10,472 1151 14,533 1166 5,574 1188 10,564 1158 8,595 1212 8,645 1217 11,671 1207 6,711 1208 6,344 1202 6,383 1200 8,356 1240 10,304 1243 8,262 1246 9,717 1158 7,941 1149 6,960 1196 8,952 1237 11,1109 1130 6,1124 1142 7,1143 1247 6,1158 1236 7,1247 1217 10,1446 1117 8,1528 1142 9,1584 1114 15,1628 1090 11,1653 1022 14,1652 1126 8,1414 1246 7,1360 1286 8,1400 1278 8,1433 1287 7,1400 1319 14,1584 1280 13,1646 1273 6,732 1306 6,1290 980 6");

function Doodle({ d, x, y, s, r }) {
  return <path d={d} transform={`translate(${x} ${y}) rotate(${r}) scale(${s})`} strokeWidth={4 / s} />;
}

function Wallpaper() {
  const lettering = { fontFamily: "Liberation Sans, sans-serif", fontWeight: 700 };
  return (
    <svg aria-hidden="true" className="absolute inset-0 h-full w-full">
      <defs>
        <pattern id="doodles" width="594" height="762" patternUnits="userSpaceOnUse" y="-1">
          <g transform="scale(.33333)" fill="none" stroke="#90d4b3" strokeWidth="4" strokeLinecap="round" strokeLinejoin="round">
            {[0, -1782].map((shift) => (
              <g key={shift} transform={`translate(${shift} 0)`}>
                {placed.map(([d, x, y, s, r], i) => <Doodle key={i} d={d} x={x} y={y} s={s} r={r} />)}
                {drawings.map((d, i) => <path key={i} d={d} />)}
                {dots.map(([x, y, r], i) => <circle key={i} cx={x} cy={y} r={r} />)}
                {bandPlaced.map(([d, x, y, s, r], i) => <Doodle key={i} d={d} x={bandX(x)} y={y} s={s} r={r} />)}
                {bandDots.map(([x, y, r], i) => <circle key={i} cx={bandX(x)} cy={y} r={r} />)}
                <g transform="translate(-15 0) scale(1.1 1)">
                  {bandDrawings.map((d, i) => <path key={i} d={d} />)}
                </g>
                <text x="245" y="132" fontSize="84" transform="rotate(-10 290 100)" style={lettering} strokeWidth="3">42</text>
                <text x="1396" y="264" fontSize="104" transform="rotate(-10 1460 220)" style={lettering} strokeWidth="3">24</text>
                <text x="1250" y="450" fontSize="72" transform="rotate(32 1250 450)" style={lettering} strokeWidth="3">BFF</text>
                <text x="1040" y="1982" fontSize="68" style={lettering} strokeWidth="3">Hi</text>
                <text x="1142" y="2258" fontSize="56" transform="rotate(-14 1140 2254)" style={lettering} strokeWidth="3">09:28</text>
              </g>
            ))}
          </g>
        </pattern>
      </defs>
      <rect width="100%" height="100%" fill="url(#doodles)" />
    </svg>
  );
}

function Ticks() {
  return (
    <svg viewBox="0 0 18 12" className="h-3 w-[18px]" fill="none" stroke="#53bdeb" strokeWidth="1.7" aria-label="Read">
      <path d="M1 6.500L4.800 10.300L12 1M7.800 9.600L8.800 10.300L17 1" />
    </svg>
  );
}

function Quote({ lines }) {
  return (
    <div className="mx-1 mt-[3px] flex overflow-hidden rounded-lg bg-[#d1f4cc]">
      <div className="w-1 shrink-0 bg-[#53bdeb]" />
      <div className="min-w-0 flex-1 pt-2 pr-[13px] pb-2 pl-[9px]">
        <div className="text-[13px] leading-[19px] font-semibold text-[#53bdeb]">Mounir Benrich Abroad</div>
        <div dir="rtl" className="mt-[3px] text-[14px] leading-[22px] text-[#667781]">
          {lines.map((l) => <p key={l}>{l}</p>)}
        </div>
      </div>
    </div>
  );
}

function Bubble({ out, tail = true, quote, lines, time, size, gap = "mt-[13px]" }) {
  return (
    <article
      className={`relative rounded-lg shadow-[0_1px_1px_rgba(11,20,26,0.16)] ${gap} ${size} ${
        out ? "self-end bg-[#d9fdd3]" : "self-start bg-white"
      } ${tail ? (out ? "rounded-tr-none" : "rounded-tl-none") : ""}`}
    >
      {tail && (
        <svg
          viewBox="0 0 8 13"
          aria-hidden="true"
          className={`absolute top-0 h-[13px] w-2 ${out ? "-right-2 fill-[#d9fdd3]" : "-left-[7px] -scale-x-100 fill-white"}`}
        >
          <path d="M0 0H7Q8.500 .5 7.500 2L0 12Z" />
        </svg>
      )}
      {quote && <Quote lines={quote} />}
      <div className="px-2 pt-1.5 pb-[5px]">
        <div dir="rtl" className="text-[15px] leading-[21px] whitespace-nowrap text-[#111b21]">
          {lines.map((l) => <p key={l}>{l}</p>)}
        </div>
        <div className="mt-[10px] flex items-center justify-end gap-[3px] text-[11px] leading-[15px] text-[#667781]">
          <time>{time}</time>
          {out && <Ticks />}
        </div>
      </div>
    </article>
  );
}

const DatePill = ({ children }) => (
  <span className="rounded-lg bg-[#fafdfc] px-[13px] text-[13px] leading-[35px] text-[#54656f] shadow-[0_1px_1px_rgba(11,20,26,0.13)]">
    {children}
  </span>
);

const long = ["السلام عليكم", "امس كان عندي مشكلة في النت ضعيف فما قدرنا نحل مشكلة تسطيب برنامج الاوتوكاد مع it", "فلو فيه امكانية ان يتواصل معي الحين النت جيد"];

function Sidebar() {
  return (
    <aside className="flex w-6 shrink-0 flex-col border-r border-[#d1d7db] bg-white">
      <div className="h-[65px] shrink-0 bg-[#f0f2f5]" />
      <div className="flex h-[55px] shrink-0 items-center border-b border-[#e3e6e8] shadow-sm">
        <button aria-label="Filter chats">
          <svg viewBox="0 0 8 14" className="h-3.5 w-2" stroke="#8696a0" strokeWidth="1.6"><path d="M0 2H8M0 7H6M0 12H2" /></svg>
        </button>
      </div>
      <div className="flex min-h-0 flex-1">
        <div className="flex-1 overflow-hidden">
          {[0, 1, 2, 3, 4, 5, 6, 7, 8].map((i) => (
            <div key={i} className={`h-[79px] border-b border-[#e9edef] ${i === 1 ? "bg-[#f0f2f5]" : ""}`} />
          ))}
        </div>
        <div className="w-1.5"><div className="h-[41%] bg-[#cecfd0]" /></div>
      </div>
    </aside>
  );
}

function Header() {
  return (
    <header className="flex h-[66px] shrink-0 items-center border-b border-[#e3e8ea] bg-[#f0f2f5] pr-[27px] pb-0.5 pl-[18px] text-[#54656f]">
      <svg viewBox="0 0 44 44" className="size-11" role="img" aria-label="Profile photo">
        <clipPath id="face"><circle cx="22" cy="22" r="21.200" /></clipPath>
        <circle cx="22" cy="22" r="22" fill="#dfe5e7" />
        <g clipPath="url(#face)" fill="#fff"><circle cx="22" cy="18.500" r="8" /><path d="M6 39C8 33 15 29 22 29S36 33 38 39L34 46H10Z" /></g>
      </svg>
      <div className="ml-4 flex-1">
        <h1 className="text-[17px] leading-[23px] text-[#111b21]">Mounir Benrich Abroad</h1>
        <p className="text-[13px] leading-5 text-[#667781]">Business Account</p>
      </div>
      <div className="flex items-center gap-[29px]">
        <button aria-label="Labels">
          <svg viewBox="0 0 26 26" className="size-[26px]" fill="#54656f"><path d="M4.500 5H18Q19.500 5 20.300 6.200L24.500 13L20.300 19.800Q19.500 21 18 21H4.500Q2.500 21 2.500 19V7Q2.500 5 4.500 5Z" /></svg>
        </button>
        <button aria-label="Search">
          <svg viewBox="0 0 26 26" className="size-[26px]" fill="none" stroke="#54656f" strokeWidth="2.200"><circle cx="10.500" cy="10.500" r="6.500" /><path d="M15.300 15.300L22.300 22.300" strokeWidth="2.800" /></svg>
        </button>
        <button aria-label="Menu">
          <svg viewBox="0 0 26 26" className="size-[26px]" fill="#54656f"><circle cx="13" cy="6.300" r="2.400" /><circle cx="13" cy="13" r="2.400" /><circle cx="13" cy="19.700" r="2.400" /></svg>
        </button>
      </div>
    </header>
  );
}

function Composer() {
  return (
    <footer className="flex h-[68px] shrink-0 items-center bg-[#f0f2f5] pr-[27px] pl-[26px] text-[#54656f]">
      <button aria-label="Emoji">
        <svg viewBox="0 0 28 28" className="size-7" fill="none" stroke="#54656f" strokeWidth="1.900">
          <circle cx="14" cy="14" r="12.300" />
          <g fill="#54656f" stroke="none"><ellipse cx="10.200" cy="11" rx="1.900" ry="2.200" /><ellipse cx="17.800" cy="11" rx="1.900" ry="2.200" /></g>
          <path d="M7.300 15.500Q14 17 20.700 15.500Q19.500 20.500 14 20.500T7.300 15.500Z" strokeWidth="1.200" />
          <path d="M8 16.800Q14 18 20 16.800L19 18.500Q14 19.500 9 18.500Z" fill="#54656f" stroke="none" />
        </svg>
      </button>
      <button aria-label="Attach" className="ml-5"><BsPaperclip className="size-6 rotate-45" strokeWidth=".3" /></button>
      <div className="relative mr-[17px] ml-[19px] flex-1">
        <input
          aria-label="Type a message"
          placeholder="Type a message"
          className="block h-[46px] w-full rounded-lg bg-white px-[18px] text-[16px] outline-none placeholder:text-[#667781]"
        />
        <span aria-hidden="true" className="absolute top-3 left-3.5 h-[22px] w-px bg-[#111b21]" />
        <span aria-hidden="true" className="absolute top-6 right-5 size-[7px] rounded-full bg-[#008069]" />
      </div>
      <button aria-label="Record voice message">
        <svg viewBox="0 0 26 26" className="size-[26px]" fill="none" stroke="#54656f" strokeWidth="2.200">
          <rect x="9.500" y="1" width="7.200" height="15" rx="3.600" fill="#54656f" stroke="none" />
          <path d="M4.800 12C5 22 21.200 22 21.400 12M13.100 19V25.500" />
        </svg>
      </button>
    </footer>
  );
}

function Taskbar() {
  return (
    <div className="flex h-[19px] shrink-0 items-start overflow-hidden bg-linear-to-r from-[#2a3a42] via-[#2a2d2f] via-65% to-[#1d2c34] text-[12px] leading-4 text-white">
      <div className="flex-1" />
      <svg viewBox="0 0 22 22" className="mt-2.5 size-[22px]" aria-hidden="true"><circle cx="11" cy="11" r="10" fill="#f5a623" /><circle cx="15" cy="12" r="5" fill="#c3cdf0" /></svg>
      <span className="mt-3 ml-2 w-[34px]">26°C</span>
      <span dir="rtl" className="mt-3 w-[68px] whitespace-nowrap">مشمس غالبًا</span>
      <svg viewBox="0 0 150 19" className="ml-[26px] h-[19px] w-[150px]" fill="none" stroke="#fff" strokeWidth="1.400" aria-hidden="true">
        <path d="M9 20L13 16L17 20M33 14Q38 11 43 14M34 20V17H42V20M42 18L46 16V20" />
        <path d="M54 20Q55 16 59 17Q62 12 66 16Q70 16 71 20Z" fill="#0a64b8" stroke="none" />
        <path d="M79 20V14L94 12V20M83 19L87 15H91V20M108 20Q112 15 119 16M114 20Q116 18 119 19M127 20V18H129L133 15V20M136 17L140 20M141 17L138 20" />
      </svg>
      <span className="mt-3 w-[38px]">ENG</span>
      <span className="mt-0.5 w-[69px] text-[11px] whitespace-nowrap">10:32 AM</span>
      <span className="mt-3 h-4 w-4 border border-white" />
      <span className="mr-[3px] ml-5 h-full w-px bg-[#6d787d]" />
    </div>
  );
}

export default function App() {
  return (
    <div className="flex h-screen flex-col overflow-hidden bg-[linear-gradient(180deg,#00a884_124px,#e4e2de_124px,#d1d7db_860px)] font-['Open_Sans','Noto_Sans',sans-serif]">
      <div className="mt-[5px] mr-20 mb-[21px] flex min-h-0 flex-1 shadow-[0_6px_18px_rgba(11,20,26,0.08)]">
        <Sidebar />
        <main className="flex min-w-0 flex-1 flex-col">
          <Header />
          <section className="relative flex min-h-0 flex-1 flex-col justify-end overflow-hidden bg-[#7acba5]">
            <Wallpaper />
            <div className="absolute inset-y-0 right-0 flex w-1.5 flex-col bg-white/10"><div className="mt-auto h-[47.5%] bg-black/15" /></div>
            <div className="absolute top-2 right-1.5 left-0 z-10 flex justify-center"><DatePill>YESTERDAY</DatePill></div>
            <div className="relative flex flex-col pr-[75px] pb-[22px] pl-[69px]">
              <Bubble out gap="" size="min-w-[365px]" quote={["اوكي انا أيضا الحين متاح"]} lines={["تمام هضيف حضرتك في الجروب للتواصل مع المهندس"]} time="2:21 pm" />
              <Bubble size="min-w-[70px]" lines={["شكرا"]} time="2:21 pm" />
              <Bubble out size="min-w-[108px]" lines={["العفو بالتوفيق"]} time="2:22 pm" />
              <div className="mt-3.5 flex justify-center"><DatePill>TODAY</DatePill></div>
              <Bubble size="min-w-[600px]" lines={long} time="9:58 am" />
              <Bubble out size="min-w-[575px]" quote={long} lines={["عليكم السلام"]} time="9:59 am" />
              <Bubble out tail={false} gap="mt-[3px]" size="min-w-[372px]" lines={["تمام المهندس هيكون متاح الساعه 12 ظهرا بتوقيت مصر"]} time="10:00 am" />
              <Bubble size="min-w-[85px]" lines={["اوكي شكرا"]} time="10:01 am" />
            </div>
          </section>
          <Composer />
        </main>
      </div>
      <Taskbar />
    </div>
  );
}
